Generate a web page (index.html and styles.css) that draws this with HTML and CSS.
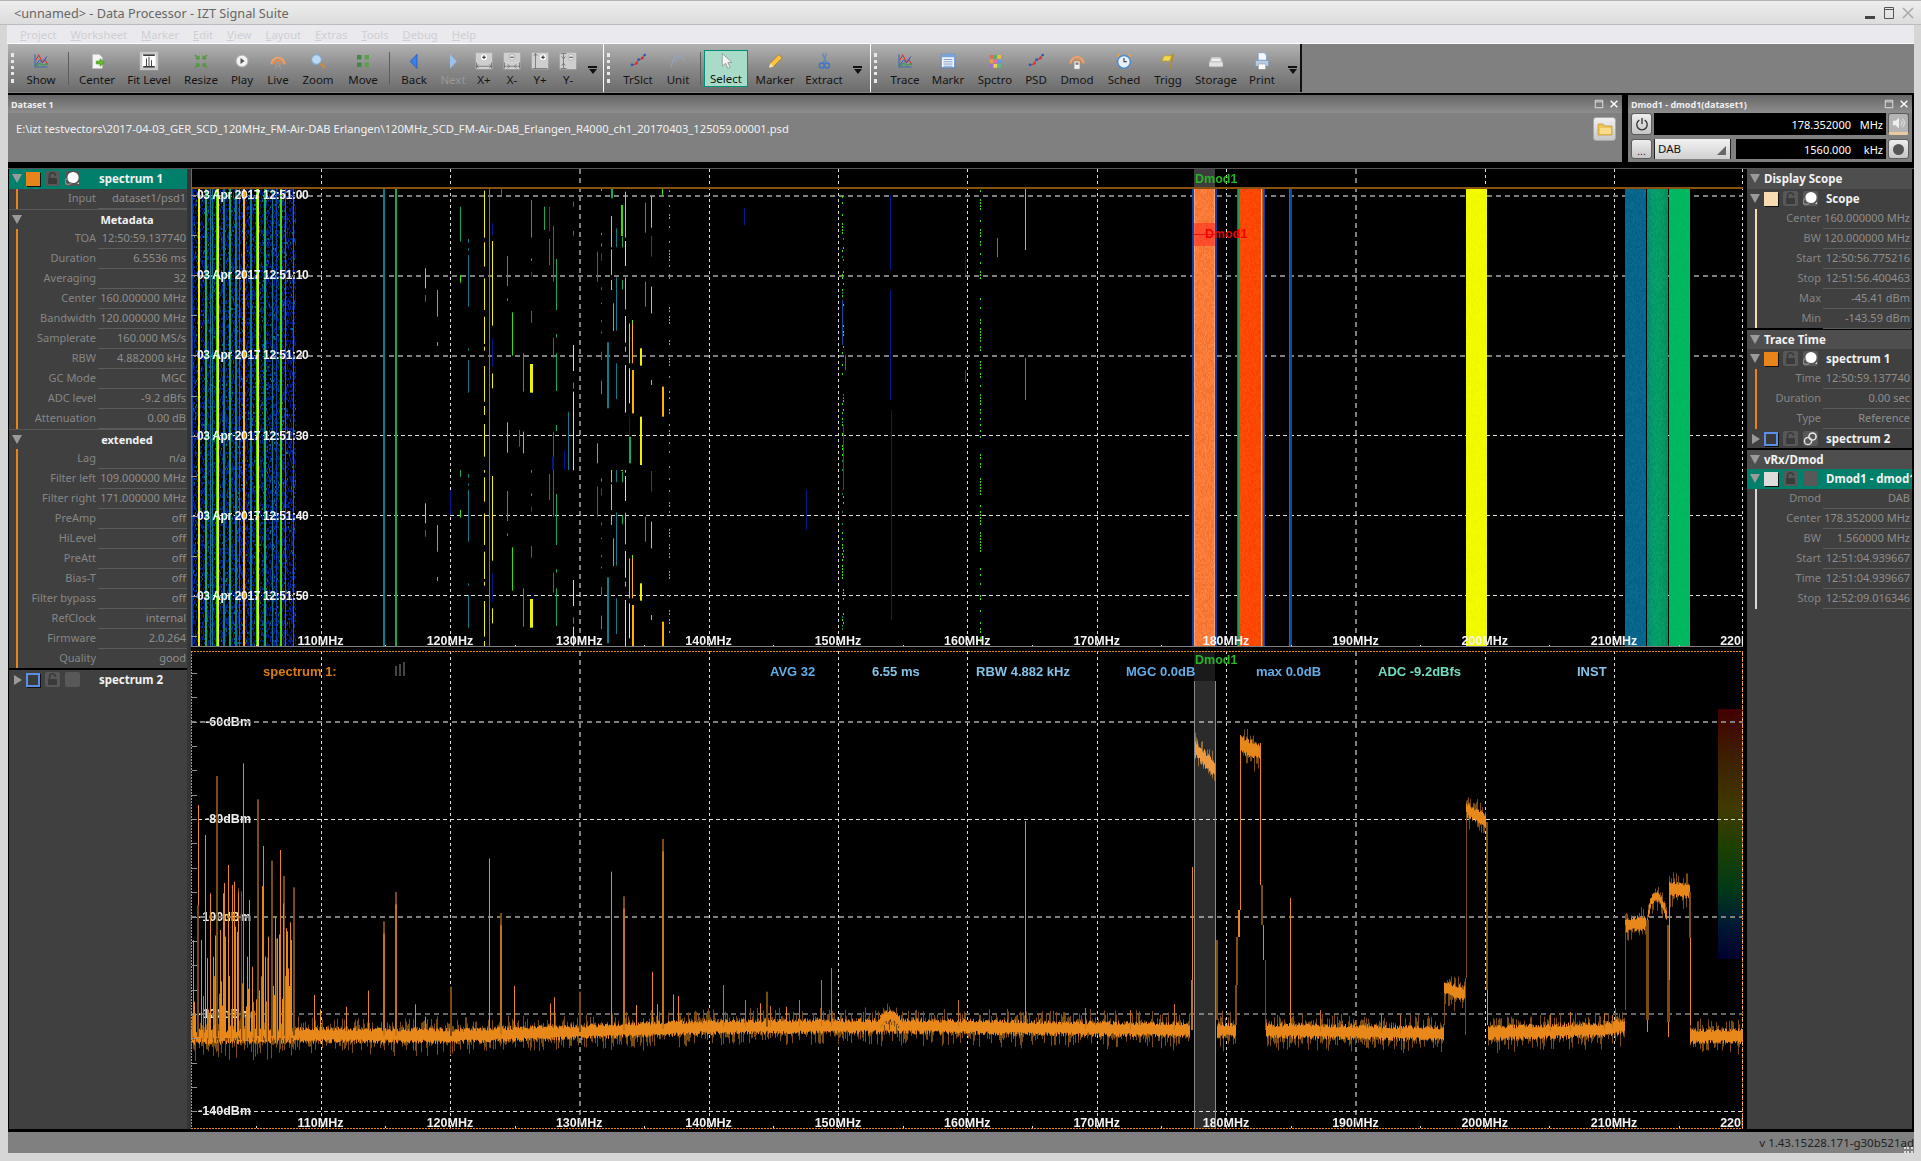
FILE: index.html
```html
<!DOCTYPE html>
<html lang="en">
<head>
<meta charset="utf-8">
<title>Data Processor - IZT Signal Suite</title>
<link rel="stylesheet" href="styles.css">
</head>
<body>
<svg class="defs" aria-hidden="true">
  <symbol id="lock" viewBox="0 0 15 15"><path d="M4.5 7V4.8a3 3 0 0 1 6 0" fill="none" stroke="#3a3a3a" stroke-width="1.6"/><rect x="3" y="7" width="9" height="6" rx="1" fill="#3a3a3a"/></symbol>
  <symbol id="dot" viewBox="0 0 15 15"><circle cx="8" cy="6.5" r="5.6" fill="#fff"/><path d="M6 11.5a3 3 0 1 1-3-4" fill="none" stroke="#888" stroke-width="1.4"/><path d="M12 13l2 0 0-2z" fill="#ddd"/></symbol>
  <symbol id="link" viewBox="0 0 15 15"><circle cx="9.5" cy="5.5" r="3.6" fill="none" stroke="#eee" stroke-width="1.5"/><circle cx="5" cy="10" r="3.6" fill="none" stroke="#ddd" stroke-width="1.5"/></symbol>
  <symbol id="chart" viewBox="0 0 24 24"><path d="M4 3v17h17" fill="none" stroke="#3b6fb0" stroke-width="1.6"/><path d="M5 11l4-7 5 10 3-4 4 7" fill="none" stroke="#d8362e" stroke-width="1.4"/><path d="M5 17l5-6 4 3 6-8" fill="none" stroke="#2f55c8" stroke-width="1.3"/><path d="M5 19l5-4 5 3 6-3" fill="none" stroke="#2e9e4a" stroke-width="1.4"/></symbol>
  <symbol id="zig" viewBox="0 0 24 24"><path d="M3 18l6-2 3-5 5-2 4-6" fill="none" stroke="#d8302e" stroke-width="1.4"/><circle cx="4" cy="17" r="1.8" fill="#2b52c4"/><circle cx="10" cy="15" r="1.8" fill="#d8302e"/><circle cx="13" cy="10" r="1.8" fill="#2b52c4"/><circle cx="18" cy="8" r="1.8" fill="#d8302e"/><circle cx="21" cy="4" r="1.6" fill="#2b52c4"/></symbol>
  <symbol id="arcs" viewBox="0 0 24 24"><path d="M4 16a8 8 0 0 1 16 0" fill="none" stroke="#f2a066" stroke-width="2.6"/><path d="M7.5 16a4.5 4.5 0 0 1 9 0" fill="none" stroke="#ee8a45" stroke-width="2"/></symbol>
  <symbol id="grip" viewBox="0 0 20 20"><rect x="2" y="2" width="6" height="6" fill="#3d8a42"/><rect x="12" y="2" width="6" height="6" fill="#5da04a"/><rect x="2" y="12" width="6" height="6" fill="#3d8a42"/><rect x="12" y="12" width="6" height="6" fill="#5da04a"/></symbol>
</svg>

<header class="titlebar">
  <span class="title">&lt;unnamed&gt; - Data Processor - IZT Signal Suite</span>
  <span class="winctl">
    <svg class="wc" viewBox="0 0 14 14"><rect x="2" y="10" width="10" height="3" fill="#444"/></svg>
    <svg class="wc" viewBox="0 0 14 14"><path d="M2.5 1.5h9v11h-9zM2.5 3.5h9" fill="none" stroke="#555"/></svg>
    <svg class="wc" viewBox="0 0 14 14"><path d="M2 2l10 10M12 2L2 12" fill="none" stroke="#aaa" stroke-width="1.6"/></svg>
  </span>
</header>
<nav class="menubar">
  <span><u>P</u>roject</span><span><u>W</u>orksheet</span><span><u>M</u>arker</span><span><u>E</u>dit</span><span><u>V</u>iew</span><span><u>L</u>ayout</span><span><u>E</u>xtras</span><span><u>T</u>ools</span><span><u>D</u>ebug</span><span><u>H</u>elp</span>
</nav>

<div class="toolbar">
  <div class="tgroup g1">
    <span class="grip"></span>
    <div class="tool"><svg class="ic"><use href="#chart"/></svg><span>Show</span></div>
    <span class="sep"></span>
    <div class="tool"><svg class="ic" viewBox="0 0 24 24"><path d="M6 3h9l4 4v15H6z" fill="#f4f4f4" stroke="#bbb"/><path d="M11 12h5V9l6 5-6 5v-3h-5z" fill="#66b832" stroke="#3e8a1c" stroke-width=".7"/></svg><span>Center</span></div>
    <div class="tool"><svg class="ic wide" viewBox="0 0 24 24"><rect x="1" y="1" width="22" height="22" fill="#c8c8c8"/><rect x="4" y="4" width="16" height="16" fill="#fff"/><path d="M5 5h14M5 19h14" stroke="#000" stroke-width="1.6"/><path d="M9 9v9M12 7v11M15 11v7" stroke="#222" stroke-width="1"/></svg><span>Fit Level</span></div>
    <div class="tool"><svg class="ic" viewBox="0 0 24 24"><path d="M4 4l5 5M9 5v4H5M20 4l-5 5M15 5v4h4M4 21l5-5M5 16h4v4M20 21l-5-5M19 16h-4v4" fill="none" stroke="#4f9a3a" stroke-width="2"/></svg><span>Resize</span></div>
    <div class="tool"><svg class="ic" viewBox="0 0 24 24"><circle cx="12" cy="12" r="8" fill="#f2f2f2" stroke="#b0b0b0" stroke-width="1.4"/><path d="M10 8v8l5.5-4z" fill="#555"/></svg><span>Play</span></div>
    <div class="tool"><svg class="ic" viewBox="0 0 24 24"><use href="#arcs" x="-1" y="-1" width="26" height="26"/><path d="M12 12L8 23M12 12l4 11M9.5 19h5" stroke="#9c9c9c" stroke-width="1.4" fill="none"/></svg><span>Live</span></div>
    <div class="tool"><svg class="ic" viewBox="0 0 24 24"><circle cx="10" cy="10" r="6.5" fill="#bcd8f2" stroke="#7fa8d0" stroke-width="1.4"/><path d="M15 15l6 6" stroke="#d08a3a" stroke-width="3"/></svg><span>Zoom</span></div>
    <div class="tool"><svg class="ic" viewBox="0 0 24 24"><use href="#grip" x="2" y="2" width="20" height="20"/></svg><span>Move</span></div>
    <span class="sep"></span>
    <div class="tool"><svg class="ic" viewBox="0 0 24 24"><path d="M16 3v19L7 12.5z" fill="#3a7ee8" stroke="#1f58b8"/></svg><span>Back</span></div>
    <div class="tool off"><svg class="ic" viewBox="0 0 24 24"><path d="M8 3v19l9-9.5z" fill="#9dc0ea"/></svg><span>Next</span></div>
    <div class="tool"><svg class="ic" viewBox="0 0 24 24"><rect x="1" y="1" width="22" height="22" fill="#cfcfcf"/><circle cx="12" cy="7" r="4" fill="#fff"/><path d="M9.5 7h5M12 4.5v5" stroke="#222" stroke-width="1.3"/><path d="M2 19h20M2 19l3-2.5M2 19l3 2.5M22 19l-3-2.5M22 19l-3 2.5M2 14v8M22 14v8" stroke="#666" fill="none"/></svg><span>X+</span></div>
    <div class="tool"><svg class="ic" viewBox="0 0 24 24"><rect x="1" y="1" width="22" height="22" fill="#cfcfcf"/><circle cx="12" cy="7" r="4" fill="#e8e8e8" stroke="#888" stroke-width=".6"/><path d="M9.5 7h5" stroke="#333" stroke-width="1.2"/><path d="M2 19h20M9 19l-3-2.5M9 19l-3 2.5M15 19l3-2.5M15 19l3 2.5M2 14v8M22 14v8" stroke="#666" fill="none"/></svg><span>X-</span></div>
    <div class="tool"><svg class="ic" viewBox="0 0 24 24"><rect x="1" y="1" width="22" height="22" fill="#cfcfcf"/><circle cx="16" cy="7" r="4" fill="#fff"/><path d="M13.5 7h5M16 4.5v5" stroke="#222" stroke-width="1.3"/><path d="M6 2v20M6 2L3.5 5M6 2l2.5 3M2 22h20" stroke="#666" fill="none"/></svg><span>Y+</span></div>
    <div class="tool"><svg class="ic" viewBox="0 0 24 24"><rect x="1" y="1" width="22" height="22" fill="#cfcfcf"/><circle cx="16" cy="7" r="4" fill="#e8e8e8" stroke="#888" stroke-width=".6"/><path d="M13.5 7h5" stroke="#333" stroke-width="1.2"/><path d="M6 2v20M2 2h8M2 22h8M6 9L3.5 6M6 9l2.5-3M6 15l-2.5 3M6 15l2.5 3" stroke="#666" fill="none"/></svg><span>Y-</span></div>
    <span class="more"></span>
  </div>
  <div class="tgroup g2">
    <span class="grip"></span>
    <div class="tool"><svg class="ic"><use href="#zig"/></svg><span>TrSlct</span></div>
    <div class="tool"><svg class="ic" viewBox="0 0 24 24"><path d="M3 20c2-12 5-15 9-15s6 3 8 7M7 11h4M12 5v4M11 1v4" fill="none" stroke="#8fa6c4" stroke-width="1.5"/></svg><span>Unit</span></div>
    <span class="sep"></span>
    <div class="tool active"><svg class="ic" viewBox="0 0 24 24"><path d="M7 2v17l4.5-4 3 7 3-1.4-3-6.6H20z" fill="#f4f4f4" stroke="#8a8a8a"/></svg><span>Select</span></div>
    <div class="tool"><svg class="ic" viewBox="0 0 24 24"><path d="M4 21l1.5-6L17 3.5l4.5 4.5L10 19.5z" fill="#f6c440" stroke="#a8741c"/><path d="M4 21l1.5-6 4.5 4.5z" fill="#f4e4c4"/></svg><span>Marker</span></div>
    <div class="tool"><svg class="ic" viewBox="0 0 24 24"><path d="M15 2l-4 13M10 2l5 13" stroke="#5a88c4" stroke-width="1.8" fill="none"/><circle cx="9" cy="18" r="3.3" fill="none" stroke="#3f76c8" stroke-width="2"/><circle cx="16" cy="18" r="3.3" fill="none" stroke="#3f76c8" stroke-width="2"/></svg><span>Extract</span></div>
    <span class="more"></span>
  </div>
  <div class="tgroup g3">
    <span class="grip"></span>
    <div class="tool"><svg class="ic"><use href="#chart"/></svg><span>Trace</span></div>
    <div class="tool"><svg class="ic" viewBox="0 0 24 24"><rect x="3" y="3" width="18" height="18" fill="#f2f6fc" stroke="#4f83c8" stroke-width="1.2"/><rect x="3" y="3" width="18" height="4" fill="#78a4dc"/><path d="M6 10h12M6 13h12M6 16h12M6 19h12" stroke="#5b7fb8"/></svg><span>Markr</span></div>
    <div class="tool"><svg class="ic" viewBox="0 0 24 24"><rect x="5" y="4" width="5" height="5" fill="#e06a5a"/><rect x="10" y="4" width="5" height="5" fill="#58b060"/><rect x="15" y="4" width="5" height="5" fill="#e8c040"/><rect x="5" y="10" width="5" height="5" fill="#e8a040"/><rect x="10" y="10" width="5" height="5" fill="#e070a0"/><rect x="15" y="10" width="5" height="5" fill="#5c9ee0"/><rect x="5" y="16" width="5" height="5" fill="#a070d0"/><rect x="10" y="16" width="5" height="5" fill="#f0d050"/><rect x="15" y="16" width="5" height="5" fill="#60b890"/></svg><span>Spctro</span></div>
    <div class="tool"><svg class="ic"><use href="#zig"/></svg><span>PSD</span></div>
    <div class="tool"><svg class="ic" viewBox="0 0 24 24"><use href="#arcs" x="-1" y="-2" width="26" height="26"/><rect x="8" y="12" width="8" height="11" rx="1" fill="#f2f2f2" stroke="#888"/><rect x="10" y="14" width="4" height="3" fill="#7a7a7a"/></svg><span>Dmod</span></div>
    <div class="tool"><svg class="ic" viewBox="0 0 24 24"><path d="M6 3l-3 3M18 3l3 3" stroke="#e8a040" stroke-width="2.4"/><circle cx="12" cy="13" r="8.5" fill="#e8f0fa" stroke="#4d8ed0" stroke-width="2"/><path d="M12 8v5h4" stroke="#333" stroke-width="1.4" fill="none"/><path d="M6 22l2-2M18 22l-2-2" stroke="#4d8ed0" stroke-width="2"/></svg><span>Sched</span></div>
    <div class="tool"><svg class="ic" viewBox="0 0 24 24"><path d="M19 2L15 22" stroke="#b58a3a" stroke-width="2.2"/><path d="M17 4c-4 3-6-1-11 2l-2 7c5-3 7 1 11-2z" fill="#f2d94a" stroke="#b89a28"/></svg><span>Trigg</span></div>
    <div class="tool"><svg class="ic" viewBox="0 0 24 24"><path d="M6 6h12l3 7v7H3v-7z" fill="#c8c8c8" stroke="#9a9a9a"/><rect x="6" y="9" width="12" height="3" fill="#f0f0f0"/><rect x="3" y="14" width="18" height="5" fill="#e2e2e2"/></svg><span>Storage</span></div>
    <div class="tool"><svg class="ic" viewBox="0 0 24 24"><path d="M7 1h8l3 3v8H7z" fill="#f4f8fc" stroke="#7fa0c8"/><rect x="3" y="11" width="18" height="8" rx="1.5" fill="#b8cce4" stroke="#6a8cb8"/><rect x="7" y="16" width="10" height="7" fill="#fff" stroke="#8a8a8a" stroke-width=".7"/></svg><span>Print</span></div>
    <span class="more"></span>
  </div>
</div>

<main class="shell">
  <div class="panels">
    <section class="panel ds">
      <div class="ptitle"><span>Dataset 1</span>
        <span class="pctl"><svg class="pc" viewBox="0 0 12 12"><path d="M1.5 1.5h9v9h-9zM1.5 3.5h9" fill="none" stroke="#eee"/></svg><svg class="pc" viewBox="0 0 12 12"><path d="M2 2l8 8M10 2l-8 8" stroke="#fff" stroke-width="1.6"/></svg></span></div>
      <div class="dsbody">
        <span class="path">E:\izt testvectors\2017-04-03_GER_SCD_120MHz_FM-Air-DAB Erlangen\120MHz_SCD_FM-Air-DAB_Erlangen_R4000_ch1_20170403_125059.00001.psd</span>
        <button class="folder"><svg viewBox="0 0 16 14" class="fold"><path d="M1 2h5l1.5 2H15v9H1z" fill="#efc55a" stroke="#c89a30" stroke-width=".8"/><rect x="3" y="6" width="11" height="6" fill="#f8dc8a"/></svg></button>
      </div>
    </section>
    <section class="panel dm">
      <div class="ptitle"><span>Dmod1 - dmod1(dataset1)</span>
        <span class="pctl"><svg class="pc" viewBox="0 0 12 12"><path d="M1.5 1.5h9v9h-9zM1.5 3.5h9" fill="none" stroke="#eee"/></svg><svg class="pc" viewBox="0 0 12 12"><path d="M2 2l8 8M10 2l-8 8" stroke="#fff" stroke-width="1.6"/></svg></span></div>
      <div class="dmrow">
        <button class="dbtn"><svg class="dico" viewBox="0 0 16 16"><path d="M5 3.5a6 6 0 1 0 6 0M8 1v7" fill="none" stroke="#333" stroke-width="1.5"/></svg></button>
        <div class="disp wide"><span>178.352000</span><span class="unit">MHz</span></div>
        <button class="dbtn spk"><svg class="dico" viewBox="0 0 16 16"><path d="M1 5.5h3L8 2v12l-4-3.5H1z" fill="#eee"/><path d="M10 5a4 4 0 0 1 0 6M12 3a7 7 0 0 1 0 10" fill="none" stroke="#eee"/></svg></button>
      </div>
      <div class="dmrow low">
        <button class="dbtn dots">...</button>
        <div class="combo"><span>DAB</span></div>
        <div class="disp mid"><span>1560.000</span><span class="unit">kHz</span></div>
        <button class="dbtn"><span class="rec"></span></button>
      </div>
    </section>
  </div>

  <div class="central">
    <aside class="tree left">
      <div class="hdr sel"><i class="tri"></i><i class="sw orange"></i><svg class="ibox"><use href="#lock"/></svg><svg class="ibox plain"><use href="#dot"/></svg><b>spectrum 1</b></div>
      <div class="props bar-o">
        <div class="row"><span>Input</span><span>dataset1/psd1</span></div>
      </div>
      <div class="sect"><i class="tri"></i><b>Metadata</b></div>
      <div class="props bar-o">
        <div class="row"><span>TOA</span><span>12:50:59.137740</span></div>
        <div class="row"><span>Duration</span><span>6.5536 ms</span></div>
        <div class="row"><span>Averaging</span><span>32</span></div>
        <div class="row"><span>Center</span><span>160.000000 MHz</span></div>
        <div class="row"><span>Bandwidth</span><span>120.000000 MHz</span></div>
        <div class="row"><span>Samplerate</span><span>160.000 MS/s</span></div>
        <div class="row"><span>RBW</span><span>4.882000 kHz</span></div>
        <div class="row"><span>GC Mode</span><span>MGC</span></div>
        <div class="row"><span>ADC level</span><span>-9.2 dBfs</span></div>
        <div class="row"><span>Attenuation</span><span>0.00 dB</span></div>
      </div>
      <div class="sect"><i class="tri"></i><b>extended</b></div>
      <div class="props bar-o">
        <div class="row"><span>Lag</span><span>n/a</span></div>
        <div class="row"><span>Filter left</span><span>109.000000 MHz</span></div>
        <div class="row"><span>Filter right</span><span>171.000000 MHz</span></div>
        <div class="row"><span>PreAmp</span><span>off</span></div>
        <div class="row"><span>HiLevel</span><span>off</span></div>
        <div class="row"><span>PreAtt</span><span>off</span></div>
        <div class="row"><span>Bias-T</span><span>off</span></div>
        <div class="row"><span>Filter bypass</span><span>off</span></div>
        <div class="row"><span>RefClock</span><span>internal</span></div>
        <div class="row"><span>Firmware</span><span>2.0.264</span></div>
        <div class="row"><span>Quality</span><span>good</span></div>
      </div>
      <div class="hdr top-rule"><i class="tri side"></i><i class="sw blue"></i><svg class="ibox"><use href="#lock"/></svg><i class="ibox"></i><b>spectrum 2</b></div>
    </aside>

    <div class="plots">
      <div class="plot">
        <canvas id="wf" width="1552" height="478"></canvas>
        <svg class="labels" viewBox="0 0 1552 478">
          <g class="ylab">
            <text x="6" y="30">03 Apr 2017 12:51:00</text>
            <text x="6" y="110">03 Apr 2017 12:51:10</text>
            <text x="6" y="190">03 Apr 2017 12:51:20</text>
            <text x="6" y="271">03 Apr 2017 12:51:30</text>
            <text x="6" y="351">03 Apr 2017 12:51:40</text>
            <text x="6" y="431">03 Apr 2017 12:51:50</text>
          </g>
          <g class="xlab">
            <text x="129.5" y="476">110MHz</text><text x="258.9" y="476">120MHz</text><text x="388.2" y="476">130MHz</text><text x="517.6" y="476">140MHz</text><text x="646.9" y="476">150MHz</text><text x="776.3" y="476">160MHz</text><text x="905.7" y="476">170MHz</text><text x="1035" y="476">180MHz</text><text x="1164.4" y="476">190MHz</text><text x="1293.7" y="476">200MHz</text><text x="1423.1" y="476">210MHz</text><text x="1552.4" y="476">220MHz</text>
          </g>
          <text class="dm-g" x="1004" y="14">Dmod1</text>
          <text class="dm-r" x="1014" y="69">Dmod1</text>
        </svg>
      </div>
      <div class="plot">
        <svg class="labels" viewBox="0 0 1552 478">
          <g class="dblab">
            <text x="60" y="75">-60dBm</text><text x="60" y="172">-80dBm</text><text x="60" y="270">-100dBm</text><text x="60" y="367">-120dBm</text><text x="60" y="464">-140dBm</text>
          </g>
          <g class="xlab">
            <text x="129.5" y="476">110MHz</text><text x="258.9" y="476">120MHz</text><text x="388.2" y="476">130MHz</text><text x="517.6" y="476">140MHz</text><text x="646.9" y="476">150MHz</text><text x="776.3" y="476">160MHz</text><text x="905.7" y="476">170MHz</text><text x="1035" y="476">180MHz</text><text x="1164.4" y="476">190MHz</text><text x="1293.7" y="476">200MHz</text><text x="1423.1" y="476">210MHz</text><text x="1552.4" y="476">220MHz</text>
          </g>
        </svg>
        <canvas id="sp" width="1552" height="478"></canvas>
        <svg class="labels" viewBox="0 0 1552 478">
          <g class="info">
            <text class="c-or" x="72" y="25">spectrum 1:</text>
            <text class="c-b1" x="579" y="25">AVG 32</text>
            <text class="c-b2" x="681" y="25">6.55 ms</text>
            <text class="c-b2" x="785" y="25">RBW 4.882 kHz</text>
            <text class="c-b1" x="935" y="25">MGC 0.0dB</text>
            <text class="c-b1" x="1065" y="25">max 0.0dB</text>
            <text class="c-t" x="1187" y="25">ADC -9.2dBfs</text>
            <text class="c-b2" x="1386" y="25">INST</text>
          </g>
          <path d="M205 15v10M209 13v12M213 11v14" class="bars"/>
          <text class="dm-g" x="1004" y="13">Dmod1</text>
        </svg>
      </div>
    </div>

    <aside class="tree right">
      <div class="sect2"><i class="tri"></i><b>Display Scope</b></div>
      <div class="hdr2"><i class="tri"></i><i class="sw cream"></i><svg class="ibox"><use href="#lock"/></svg><svg class="ibox"><use href="#dot"/></svg><b>Scope</b></div>
      <div class="props bar-c">
        <div class="row"><span>Center</span><span>160.000000 MHz</span></div>
        <div class="row"><span>BW</span><span>120.000000 MHz</span></div>
        <div class="row"><span>Start</span><span>12:50:56.775216</span></div>
        <div class="row"><span>Stop</span><span>12:51:56.400463</span></div>
        <div class="row"><span>Max</span><span>-45.41 dBm</span></div>
        <div class="row"><span>Min</span><span>-143.59 dBm</span></div>
      </div>
      <div class="sect2 ruled"><i class="tri"></i><b>Trace Time</b></div>
      <div class="hdr2"><i class="tri"></i><i class="sw orange"></i><svg class="ibox"><use href="#lock"/></svg><svg class="ibox"><use href="#dot"/></svg><b>spectrum 1</b></div>
      <div class="props bar-o">
        <div class="row"><span>Time</span><span>12:50:59.137740</span></div>
        <div class="row"><span>Duration</span><span>0.00 sec</span></div>
        <div class="row"><span>Type</span><span>Reference</span></div>
      </div>
      <div class="hdr2"><i class="tri side"></i><i class="sw blue"></i><svg class="ibox"><use href="#lock"/></svg><svg class="ibox"><use href="#link"/></svg><b>spectrum 2</b></div>
      <div class="sect2 ruled"><i class="tri"></i><b>vRx/Dmod</b></div>
      <div class="hdr2 sel"><i class="tri"></i><i class="sw white"></i><svg class="ibox"><use href="#lock"/></svg><i class="ibox"></i><b>Dmod1 - dmod1(dataset1)</b></div>
      <div class="props bar-w">
        <div class="row"><span>Dmod</span><span>DAB</span></div>
        <div class="row"><span>Center</span><span>178.352000 MHz</span></div>
        <div class="row"><span>BW</span><span>1.560000 MHz</span></div>
        <div class="row"><span>Start</span><span>12:51:04.939667</span></div>
        <div class="row"><span>Time</span><span>12:51:04.939667</span></div>
        <div class="row"><span>Stop</span><span>12:52:09.016346</span></div>
      </div>
    </aside>
  </div>
</main>

<footer class="status"><span>v 1.43.15228.171-g30b521ad</span><i class="sizegrip"></i></footer>
<script src="app.js"></script>
</body>
</html>
```

FILE: styles.css
```css
* { box-sizing: border-box; }
html, body { margin: 0; height: 1161px; overflow: hidden; }
body {
  background: #d6d6d6;
  font-family: "Noto Sans", "DejaVu Sans", sans-serif;
  font-size: 11px;
  display: flex;
  flex-direction: column;
}
.defs { position: absolute; width: 0; height: 0; }

/* title + menu */
.titlebar {
  height: 25px; flex: none;
  display: flex; align-items: center; justify-content: space-between;
  padding: 0 6px 0 14px;
  background: linear-gradient(#eeeeee, #dcdcdc);
  border-top: 1px solid #b4b4b4;
  border-bottom: 1px solid #bcbcbc;
  color: #666; font-size: 12.7px;
}
.winctl { display: flex; gap: 5px; }
.wc { width: 14px; height: 14px; }
.menubar {
  height: 19px; flex: none; margin-left: 7px; margin-right: 7px;
  display: flex; gap: 14px; align-items: center;
  padding-left: 13px;
  background: #e9e9ee; color: #cfcfd2; font-size: 11.2px;
  border-bottom: 1px solid #fafafa;
}

/* toolbar */
.toolbar {
  height: 49px; flex: none;
  margin: 0 7px 0 8px;
  display: flex;
  background: #808080;
}
.tgroup {
  display: grid; height: 48px;
  background: linear-gradient(#b2b2b2, #8a8a8a 50%, #6c6c6c);
}
.g1 { grid-template-columns: 12px 42px 12px 46px 58px 46px 36px 36px 44px 46px 6px 44px 34px 28px 28px 28px 28px 20px; width: 596px; border-right: 1px solid #fff; }
.g2 { grid-template-columns: 12px 44px 36px 8px 44px 54px 44px 23px; width: 267px; border-right: 1px solid #fff; }
.g3 { grid-template-columns: 12px 44px 42px 52px 30px 52px 42px 46px 50px 42px 18px; width: 431px; border-right: 2px solid #111; }
.grip { margin: 9px 0 9px 3px; border-left: 3px dotted #e8e8e8; }
.sep { justify-self: center; margin: 8px 0 7px; width: 1px; background: #5e5e5e; }
.tool {
  display: flex; flex-direction: column; align-items: center;
  padding-top: 5px; color: #141414; font-size: 11.5px; line-height: 14px; white-space: nowrap;
}
.tool .ic { width: 18px; height: 18px; flex: none; margin: 3px 0; }
.tool .ic.wide { width: 20px; height: 20px; margin: 2px 0; }
.tool.off { color: #999; }
.tool.active {
  height: 37px; margin-top: 6px; padding-top: 0;
  background: #a9dcc8; border: 1px solid #00907a;
}
.tool.active .ic { margin: 1px 0 2px; }
.more { justify-self: center; align-self: center; margin-top: 3px; width: 9px; height: 8px; border-top: 2px solid #111; position: relative; }
.more::after { content: ""; position: absolute; left: 1px; top: 1px; border: 4px solid transparent; border-top: 5px solid #111; border-bottom: 0; }

/* main shell */
.shell { flex: none; height: 1039px; margin: 0 7px 0 8px; background: #000; padding-top: 2px; }
.panels { display: flex; gap: 6px; height: 67px; }
.panel { background: #808080; color: #fff; }
.ds { width: 1614px; }
.dm { width: 284px; }
.ptitle {
  height: 18px; display: flex; justify-content: space-between; align-items: center;
  padding: 0 3px;
  background: linear-gradient(#666666, #8e8e8e);
  font-size: 9px; font-weight: 700; color: #eee;
}
.pctl { display: flex; gap: 5px; }
.pc { width: 10px; height: 10px; }
.dsbody {
  height: 49px; display: flex; justify-content: space-between; align-items: center;
  padding: 0 6px 17px 8px;
}
.path { font-size: 11.2px; color: #f2f2f2; white-space: nowrap; position: relative; top: -1px; }
.folder {
  width: 23px; height: 24px; padding: 0; border: 1px solid #a8a8a8; border-radius: 3px;
  background: linear-gradient(#f0f0f0, #c8c8c8);
  display: flex; align-items: center; justify-content: center;
}
.fold { width: 16px; height: 14px; }
.dmrow { display: flex; gap: 2px; height: 22px; padding-left: 3px; }
.dmrow.low { margin-top: 4px; height: 20px; }
.dbtn {
  width: 21px; padding: 0; border: 1px solid #5c5c5c; border-radius: 3px; flex: none;
  background: linear-gradient(#eeeeee, #c6c6c6);
  display: flex; align-items: center; justify-content: center;
}
.dico { width: 14px; height: 14px; }
.spk { background: #b4b4b4; border-bottom: 3px solid #e8c9a0; }
.dots { align-items: flex-end; font-size: 10px; color: #303; line-height: 1; padding-bottom: 1px; }
.rec { width: 11px; height: 11px; border-radius: 50%; background: #555; }
.disp {
  background: #000; color: #fff; display: flex; justify-content: flex-end; gap: 6px;
  align-items: center; padding-right: 3px; font-size: 11px;
}
.disp.wide { width: 232px; }
.disp.mid { width: 150px; margin-left: 3px; }
.unit { width: 26px; text-align: right; }
.combo {
  width: 77px; background: linear-gradient(#f2f2f2, #d0d0d0); color: #111;
  font-size: 11.5px; padding: 2px 0 0 3px; position: relative;
  border-left: 1px solid #222; border-right: 1px solid #222;
}
.combo::after { content: ""; position: absolute; right: 4px; bottom: 4px; border-left: 9px solid transparent; border-bottom: 9px solid #666; }

/* central */
.central { display: flex; margin-top: 6px; height: 961px; border-top: 1px solid #555; padding-left: 1px; }
.plots { width: 1552px; display: flex; flex-direction: column; gap: 4px; flex: none; }
.plot { position: relative; height: 478px; flex: none; background: #000; }
.plot canvas, .labels { position: absolute; left: 0; top: 0; width: 1552px; height: 478px; display: block; }
.labels { overflow: hidden; }
.labels text { font-family: "Liberation Sans", sans-serif; font-weight: 700; }
.ylab text { fill: #f4f4f4; font-size: 12px; letter-spacing: -.35px; }
.xlab text { fill: #f4f4f4; font-size: 12.5px; text-anchor: middle; }
.dblab text { fill: #f0f0f0; font-size: 12.5px; text-anchor: end; }
.info text { font-size: 13px; }
.c-or { fill: #d97c12; }
.c-b1 { fill: #62ade6; }
.c-b2 { fill: #84c2e8; }
.c-t { fill: #72dcc0; }
.bars { stroke: #444; stroke-width: 2; fill: none; }
.labels .dm-g { fill: #28b428; font-size: 12.5px; }
.labels .dm-r { fill: #f00000; font-size: 12.5px; }

/* trees */
.tree { background: #404040; color: #8e8e8e; flex: none; height: 960px; overflow: hidden; }
.left { width: 182px; border-right: 4px solid #343434; }
.right { width: 165px; margin-left: 4px; }
.tree b { color: #f2f2f2; font-weight: 700; white-space: nowrap; }
.tri { width: 0; height: 0; flex: none; border-left: 5px solid transparent; border-right: 5px solid transparent; border-top: 9px solid #9a9a9a; }
.tri.side { border-top: 5px solid transparent; border-bottom: 5px solid transparent; border-left: 8px solid #9a9a9a; border-right: 0; margin-left: 2px; margin-right: 0; }
.sw { width: 14px; height: 14px; flex: none; box-shadow: 1px 1px 0 #111; }
.orange { background: #e8851a; }
.cream { background: #f6dcb0; }
.white { background: #dcdcdc; }
.blue { background: #3a3a3a; border: 2px solid #5b8ee8; }
.ibox { width: 15px; height: 15px; flex: none; background: #585858; border-radius: 2px; display: block; }
.ibox.plain { background: #555; }
.hdr { height: 20px; display: flex; align-items: center; padding: 0 0 1px 3px; gap: 5px; position: relative; }
.hdr .tri { margin-right: -1px; }
.hdr b { flex: 1; text-align: center; font-size: 11.5px; margin-left: -10px; }
.hdr.sel { background: #00806a; }
.hdr.top-rule { margin-top: -1px; border-top: 2px solid #000; height: 22px; }
.sect { height: 20px; display: flex; align-items: center; padding: 0 0 1px 3px; position: relative; border-top: 1px solid #585858; }
.sect b { flex: 1; text-align: center; font-size: 11px; padding-left: 45px; }
.props { margin-left: 7px; border-left: 2px solid #e8851a; }
.bar-c { border-left-color: #f6dcb0; }
.bar-w { border-left-color: #d8d8d8; }
.row { height: 20px; display: grid; grid-template-columns: 78px 89px; column-gap: 2px; align-items: start; white-space: nowrap; line-height: 18px; }
.row span { text-align: right; }
.row span:first-child { color: #868686; }
.row span:last-child { border-bottom: 1px solid #5c5c5c; height: 20px; padding-right: 1px; }
.right .props { margin-left: 8px; }
.right .row { grid-template-columns: 64px 88px; }
.sect2 { height: 20px; display: flex; align-items: center; gap: 4px; padding: 0 0 1px 3px; background: #4e4e4e; }
.sect2 b { font-size: 11.5px; }
.sect2.ruled { border-top: 2px solid #000; height: 21px; margin-top: -1px; }
.hdr2 { height: 20px; display: flex; align-items: center; padding: 0 0 1px 3px; gap: 5px; overflow: hidden; }
.hdr2 .sw { margin-left: -1px; }
.hdr2 b { font-size: 11.5px; margin-left: 3px; }
.hdr2.sel { background: #00806a; }

/* status */
.status {
  flex: none; height: 21px; margin: 0 7px 0 8px; background: #808080; color: #222; position: relative;
  display: flex; justify-content: flex-end; align-items: center; font-size: 11.5px; overflow: hidden; white-space: nowrap;
}
.sizegrip { position: absolute; right: 1px; bottom: 0; width: 9px; height: 6px; border-top: 2px dotted #ddd; border-bottom: 2px dotted #ddd; }
```

FILE: app.js
```javascript
(function () {
  function rng(seed) {
    return function () {
      seed = (seed + 0x6D2B79F5) | 0;
      var t = Math.imul(seed ^ (seed >>> 15), 1 | seed);
      t = (t + Math.imul(t ^ (t >>> 7), 61 | t)) ^ t;
      return ((t ^ (t >>> 14)) >>> 0) / 4294967296;
    };
  }
  var OX = 191;
  function fx(f) { return Math.round(320.5 + (f - 110) * 12.936); }

  function setup(id, oy) {
    var c = document.getElementById(id).getContext('2d');
    c.translate(-OX, -oy);
    return c;
  }
  function hdash(c, y, thick, x0, x1, col) {
    c.fillStyle = col || (thick ? '#7e7e7e' : '#dedede');
    var on = thick ? 5 : 4, off = thick ? 4 : 3, h = thick ? 2 : 1;
    for (var x = x0; x < x1; x += on + off) c.fillRect(x, y, on, h);
  }
  function vdash(c, x, thick, y0, y1) {
    c.fillStyle = thick ? '#7e7e7e' : '#dedede';
    var on = thick ? 5 : 3, off = thick ? 4 : 3, w = thick ? 2 : 1;
    for (var y = y0; y < y1; y += on + off) c.fillRect(x, y, w, on);
  }
  function v(c, x, y0, y1, col, w) {
    c.fillStyle = col;
    c.fillRect(x, y0, w || 1, y1 - y0);
  }
  var THICKF = { 130: 1, 190: 1 };

  /* ---------- waterfall ---------- */
  (function () {
    var c = setup('wf', 169), r = rng(77);
    var f, y, x, i;
    for (f = 110; f <= 220; f += 10) vdash(c, fx(f) - (f === 220 ? 1 : 0), THICKF[f], 169, 646);
    [[195, 1], [275, 1], [355, 1], [435, 0], [515, 0], [595, 0]].forEach(function (g) { hdash(c, g[0], g[1], 191, 1743); });

    /* dense low band */
    for (y = 188; y < 646; y += 2) {
      for (x = 191; x < 296; x++) {
        var p = r();
        if (p < 0.36) c.fillStyle = '#001a80';
        else if (p < 0.44) c.fillStyle = '#003498';
        else if (p < 0.47) c.fillStyle = '#0a6a70';
        else continue;
        c.fillRect(x, y, 1, 2);
      }
    }
    var C = { y: '#f2f200', o: '#ffb400', g: '#10ac5c', l: '#3ce000', t: '#0a7c8c', b: '#0a4aa8', n: '#001a90', d: '#7fe000' };
    [[191, 2, 'b'], [198, 2, 'y'], [205, 2, 'g'], [210, 1, 't'], [212, 1, 't'], [216, 1, 'l'], [217, 2, 'y'], [223, 2, 't'], [229, 2, 'g'], [235, 2, 't'], [239, 1, 't'], [243, 2, 'o'], [250, 2, 't'], [256, 1, 'l'], [257, 2, 'y'], [264, 2, 'g'], [272, 1, 't'], [276, 1, 'b'], [280, 2, 'l'], [285, 1, 't'], [293, 1, 't'], [383, 2, 't'], [395, 2, 'g'], [489, 1, 'g']]
      .forEach(function (l) { v(c, l[0], 188, 646, C[l[2]], l[1]); });

    /* fragments: column, from, to, colour, width (coordinates in 3x crop space) */
    var F = [
      [705,295,355,'o'],[705,375,395,'t'],[740,360,440,'l'],[740,516,528,'l'],[810,110,215,'g'],[810,315,338,'l'],
      [835,207,218,'t'],[835,235,242,'t'],[835,255,410,'t'],[835,535,542,'t'],[835,570,668,'t'],
      [883,62,203,'y'],[883,217,290,'y'],[883,325,420,'y'],[883,440,522,'y'],[883,530,542,'y'],[883,588,695,'y'],[883,708,735,'y'],[883,762,860,'y'],
      [907,160,196,'n'],[907,213,467,'y'],[907,505,590,'n'],[907,610,655,'y'],[932,55,75,'t'],
      [952,258,348,'g'],[952,385,393,'g'],[952,757,848,'d'],[967,427,557,'l'],[988,780,830,'t'],[1000,550,665,'g'],[1000,785,850,'d'],
      [1023,90,203,'g'],[1023,266,272,'l'],[1023,305,320,'b'],[1023,423,458,'t'],[1020,582,668,'y',3],
      [1063,110,180,'g'],[1078,110,183,'b'],[1076,207,285,'t'],[1090,168,335,'t'],[1090,503,563,'t'],[1090,785,880,'t'],
      [1099,267,420,'g'],[1099,492,503,'g'],[1099,550,663,'g'],[1099,765,783,'g'],[1133,725,900,'t'],
      [1148,95,110,'t'],[1148,183,197,'t'],[1148,525,603,'t'],[1150,525,603,'y'],[1150,665,900,'y'],[1150,637,656,'g'],
      [1222,245,335,'t'],[1234,58,62,'y'],[1234,188,195,'g'],[1234,220,230,'g'],[1234,250,272,'b'],[1234,352,360,'t'],[1234,398,402,'g'],[1234,450,457,'t'],[1234,485,490,'g'],[1234,545,570,'t'],[1234,632,672,'g'],
      [1250,517,715,'t',2],[1262,55,85,'g',2],[1262,138,232,'o'],[1262,238,315,'o'],[1262,330,360,'o'],[1268,400,483,'l'],
      [1278,175,232,'t'],[1278,322,482,'t'],[1278,580,687,'t'],[1292,105,198,'l',2],[1295,200,232,'g'],[1295,330,358,'g'],
      [1306,65,203,'o'],[1306,213,288,'y'],[1306,323,418,'o'],[1306,438,518,'y'],[1306,530,545,'o'],[1306,585,728,'y'],
      [1316,460,580,'o'],[1316,595,700,'y'],[1325,450,560,'d'],[1327,460,580,'o'],[1325,600,730,'o',2],
      [1350,535,587,'y',2],[1350,740,885,'y',2],[1366,98,188,'g'],[1366,335,410,'g'],[1384,80,173,'o'],[1384,198,260,'b'],[1384,350,430,'o'],[1384,630,645,'o'],
      [1416,650,740,'o',2],[1417,55,75,'l'],[1316,800,880,'g',2],[1318,740,800,'n'],[1087,860,900,'n',2],[1122,840,900,'n'],[1220,820,880,'l']
    ];
    F.forEach(function (s) {
      var X = Math.round(190 + s[0] / 3), a = 170 + s[1] / 3, b = 170 + s[2] / 3;
      v(c, X, a, b, C[s[3]], s[4] || 1);
      var a2 = Math.max(a + 235, 470), b2 = Math.min(b + 235, 646);
      if (b2 > a2) v(c, X, a2, b2, C[s[3]], s[4] || 1);
    });
    /* dotted columns */
    for (y = 190; y < 646; y += 3) {
      if (r() < 0.4) v(c, 669, y, y + 2, C.l);
      if (r() < 0.55) v(c, 842 + (r() < .3 ? 1 : 0), y, y + 2, r() < .3 ? '#0a8c6c' : C.l);
      if (r() < 0.45) v(c, 980, y, y + 2, C.l);
    }
    [[890, 195, 270, 'n'], [890, 290, 400, 'n'], [891, 410, 620, 'n'], [744, 208, 225, 'n'], [806, 490, 530, 'n'], [450, 490, 515, 'n'], [965, 255, 275, 'n'], [965, 370, 382, 'b'], [997, 238, 257, 'g'], [1025, 188, 250, 'd'], [1025, 358, 400, 'g'], [842, 300, 345, 'b'], [843, 425, 490, 'b'], [845, 355, 370, 't']]
      .forEach(function (s) { v(c, s[0], s[1], s[2], C[s[3]]); });

    /* wide carriers */
    function band(x0, x1, col, vary) {
      for (var yy = 188; yy < 646; yy += 2) for (var xx = x0; xx < x1; xx++) {
        var d = (r() - .5) * vary;
        c.fillStyle = 'rgb(' + (col[0] + d | 0) + ',' + (col[1] + d | 0) + ',' + (col[2] + d | 0) + ')';
        c.fillRect(xx, yy, 1, 2);
      }
    }
    v(c, 1192, 188, 646, '#0a40a8', 2); v(c, 1215, 188, 646, '#0a40a8', 2);
    band(1194, 1215, [250, 112, 40], 22);
    v(c, 1237, 188, 646, '#0a6a90', 1); v(c, 1238, 188, 646, '#10a060', 2);
    band(1240, 1261, [255, 72, 4], 14);
    v(c, 1261, 188, 646, '#f2f200', 1); v(c, 1262, 188, 646, '#d05810', 1); v(c, 1263, 188, 646, '#0a6a90', 1); v(c, 1264, 188, 646, '#0a40a8', 1);
    v(c, 1289, 188, 646, '#0a8080', 1); v(c, 1290, 188, 646, '#0a4aa8', 2);
    band(1466, 1487, [242, 250, 0], 6);
    band(1625, 1646, [8, 102, 140], 12);
    for (x = 1647; x < 1668; x++) { var t = (x - 1647) / 21; band(x, x + 1, [6, 140 + 18 * Math.sin(t * 3.14), 118 - 30 * t], 12); }
    band(1669, 1690, [0, 184, 96], 6);

    /* marker overlay */
    c.fillStyle = 'rgba(255,255,255,.24)'; c.fillRect(1194, 169, 21, 19);
    c.fillStyle = 'rgba(255,255,255,.08)'; c.fillRect(1194, 188, 21, 458);
    v(c, 1194, 188, 646, 'rgba(255,255,255,.3)'); v(c, 1214, 188, 646, 'rgba(255,255,255,.3)');
    c.fillStyle = 'rgba(255,30,30,.5)'; c.fillRect(1194, 223, 21, 23);
    c.fillStyle = '#f01010'; c.fillRect(1194, 234, 21, 1);

    /* frame */
    c.fillStyle = '#8a5210'; c.fillRect(191, 187, 1552, 2);
    c.fillStyle = '#6a6a6a'; c.fillRect(191, 169, 1, 478);
    c.fillStyle = '#9a9a9a';
    for (y = 195; y < 640; y += 40.1) c.fillRect(191, Math.round(y), 6, 1);
    c.fillStyle = '#808080'; c.fillRect(191, 646, 1552, 1);
    c.fillStyle = '#ddd';
    for (f = 105; f < 220; f += 10) c.fillRect(fx(f), 645, 1, 1);
  })();

  /* ---------- spectrum ---------- */
  (function () {
    var c = setup('sp', 651), r = rng(4242);
    var BR = '#e8871a', DK = '#7a4c12', MD = '#c47414';
    var f, x, i;

    /* colour bar under the grid */
    var g = c.createLinearGradient(0, 709, 0, 959);
    g.addColorStop(0, '#420000'); g.addColorStop(.2, '#3e2000'); g.addColorStop(.4, '#403a00');
    g.addColorStop(.55, '#1e4000'); g.addColorStop(.72, '#003a18'); g.addColorStop(.86, '#001a34'); g.addColorStop(1, '#00002c');
    c.fillStyle = g; c.fillRect(1718, 709, 25, 250);

    for (f = 110; f <= 220; f += 10) vdash(c, fx(f) - (f === 220 ? 1 : 0), THICKF[f], 651, 1128);
    hdash(c, 721, 1, 191, 1743); hdash(c, 819, 0, 191, 1743); hdash(c, 916, 1, 191, 1743); hdash(c, 1013, 1, 191, 1743, '#666'); hdash(c, 1111, 0, 191, 1743);

    function floorY(px) {
      var pts = [[191, 1037], [320, 1035], [450, 1036], [580, 1032], [708, 1027], [900, 1026], [1190, 1030], [1290, 1031], [1450, 1034], [1600, 1030], [1622, 1026], [1690, 1036], [1743, 1036]];
      for (var k = 1; k < pts.length; k++) if (px <= pts[k][0]) {
        var a = pts[k - 1], b = pts[k];
        return a[1] + (b[1] - a[1]) * (px - a[0]) / (b[0] - a[0]);
      }
      return 1036;
    }
    function col(px, base, amp) {
      var up = amp * (.55 + .6 * r()), dn = amp * (.55 + .6 * r());
      var u2 = up + Math.pow(r(), 3) * amp * 1.7, d2 = dn + Math.pow(r(), 3) * amp * 1.9;
      v(c, px, base - u2, base + d2, DK);
      v(c, px, base - up, base + dn, BR);
    }
    /* noise floor segments */
    [[191, 1190], [1217, 1236], [1266, 1444], [1488, 1625], [1690, 1743]].forEach(function (s) {
      for (var px = s[0]; px < s[1]; px++) col(px, floorY(px), 7);
    });
    /* forest */
    for (i = 0; i < 90; i++) {
      x = 191 + Math.floor(r() * 100);
      v(c, x, 975 + r() * 60, 1040, r() < .6 ? BR : MD, 1);
    }
    for (i = 0; i < 22; i++) {
      x = 191 + Math.floor(r() * 100);
      v(c, x, 880 + r() * 90, 1040, r() < .7 ? BR : DK, 1);
    }
    for (x = 191; x < 300; x += 1) if (r() < .25) v(c, x, 1038, 1040 + r() * 22, DK, 1);

    var SX = [[22,495,0],[38,585,0],[52,760,0],[68,655,0],[68,408,1],[85,760,0],[100,675,0],[110,735,0],[125,755,0],[138,370,0],[155,780,0],[175,630,0],[175,478,1],[190,618,0],[211,662,1],[222,830,0],[235,630,0],[243,708,1],[243,790,0],[250,865,0],[268,742,1],[8,900,0],[18,795,1],[30,900,0],[60,950,0],[78,870,0],[92,890,0],[118,860,0],[148,950,0],[162,980,0],[197,950,0],[205,890,0],[228,895,0],[258,1090,0],[265,900,0],
      [325,1065,0],[340,1108,0],[408,1100,0],[465,1052,0],[505,845,2],[535,757,2],[587,1093,0],[615,1130,0],[679,1040,1],[782,655,0],[810,820,2],[847,1038,0],[940,1090,0],[950,1072,0],[1016,1055,1],[1099,695,0],[1131,770,2],[1165,1095,0],[1206,995,0],[1220,1093,0],[1233,598,2],[1261,1063,0],[1276,1068,0],[1490,1090,0],[1505,1055,1],[1558,1100,0]];
    SX.forEach(function (s) {
      var px = Math.round(190 + s[0] / 2.613), top = 640 + s[1] / 3, y = floorY(px);
      if (s[2] === 0) v(c, px, top, y, BR, 1);
      else if (s[2] === 1) v(c, px, top, y, DK, 2);
      else { v(c, px, top, y, MD, 2); v(c, px, top, top + 12, DK, 2); }
    });
    [[723, 985], [745, 1000], [770, 1006], [799, 1000], [821, 980], [831, 968], [880, 1015], [958, 1000], [1025, 821], [1085, 1008], [1130, 1010], [1174, 1004], [1290, 898], [1381, 1013], [1320, 1010], [1400, 1015], [1550, 1015], [1570, 1012], [1604, 1013], [1612, 1015]]
      .forEach(function (s) { v(c, s[0], s[1], floorY(s[0]), s[1] < 900 ? BR : MD, 1); });
    /* bump near 153 MHz */
    for (x = 880; x < 900; x++) col(x, 1022 - 6 * Math.sin((x - 880) / 20 * 3.14), 6);

    /* carriers: x range, level function */
    function carrier(x0, x1, fn, amp) {
      for (var px = x0; px < x1; px++) col(px, fn(px), amp || 7);
    }
    carrier(1194, 1215, function (p) { return 748 + (p - 1194) * 1.05; }, 8);
    carrier(1241, 1261, function (p) { return 745 + (p - 1241) * .35; }, 8);
    carrier(1444, 1465, function (p) { return 988 + (p - 1444) * .28; }, 7);
    carrier(1466, 1486, function (p) { return 810 + (p - 1466) * .55; }, 7);
    carrier(1625, 1646, function (p) { return 925 - (p - 1625) * .12; }, 7);
    carrier(1647, 1667, function (p) { var t = (p - 1647) / 20; return 922 - 26 * Math.sin(Math.pow(t, .7) * 2.9) * (t < .9 ? 1 : .8); }, 5);
    carrier(1669, 1690, function (p) { return 889 + (p - 1669) * .12; }, 7);

    /* carrier walls */
    [[1192, 867, 1030, BR, 1], [1191, 980, 1030, MD, 2], [1215, 770, 940, MD, 1], [1216, 940, 1020, DK, 2],
     [1240, 735, 910, BR, 1], [1238, 910, 937, BR, 2], [1236, 937, 985, DK, 2], [1235, 985, 1025, DK, 2],
     [1260, 753, 885, BR, 1], [1261, 885, 925, DK, 2], [1263, 925, 960, BR, 1], [1265, 960, 1030, DK, 1],
     [1444, 993, 1025, DK, 1], [1466, 812, 978, DK, 1], [1465, 978, 1035, DK, 1],
     [1486, 822, 990, DK, 2], [1487, 990, 1025, BR, 1],
     [1625, 925, 1010, DK, 1], [1646, 920, 1020, DK, 3], [1647, 1020, 1032, BR, 1],
     [1667, 925, 1022, DK, 3], [1668, 1022, 1037, BR, 1], [1669, 888, 980, BR, 1],
     [1689, 892, 938, DK, 2], [1690, 938, 1025, BR, 1]]
      .forEach(function (w) { v(c, w[0], w[1], w[2], w[3], w[4]); });

    /* selected band overlay */
    c.fillStyle = 'rgba(255,255,255,.1)'; c.fillRect(1194, 651, 21, 30);
    c.fillStyle = 'rgba(255,255,255,.17)'; c.fillRect(1194, 681, 21, 448);
    v(c, 1194, 681, 1129, '#8a8a8a'); v(c, 1215, 681, 1129, '#8a8a8a');

    /* frame: dotted orange, ticks */
    c.fillStyle = '#e08a20';
    for (x = 191; x < 1744; x += 3) { c.fillRect(x, 651, 2, 1); c.fillRect(x, 1128, 2, 1); }
    for (i = 651; i < 1129; i += 3) { c.fillRect(191, i, 1, 2); c.fillRect(1742, i, 1, 2); }
    c.fillStyle = '#909090';
    for (i = 673; i < 1128; i += 24.35) c.fillRect(192, Math.round(i), 5, 1);
    c.fillStyle = '#ddd';
    for (f = 105; f < 220; f += 10) c.fillRect(fx(f), 1126, 1, 2);
  })();
})();
```
